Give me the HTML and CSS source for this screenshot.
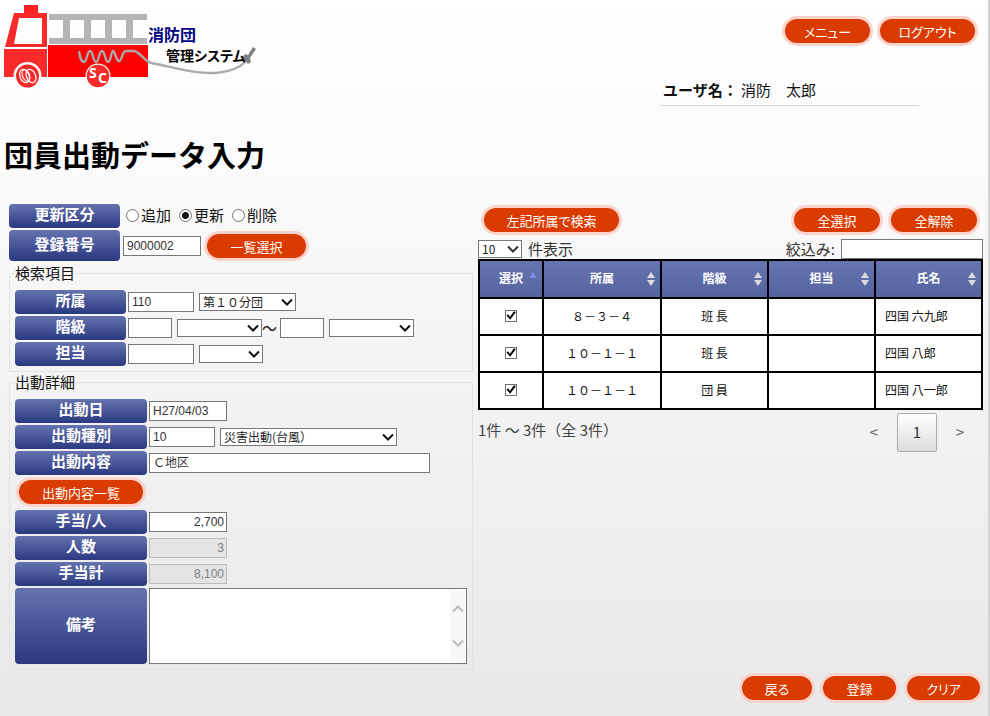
FILE: index.html
```html
<!DOCTYPE html>
<html lang="ja">
<head>
<meta charset="utf-8">
<meta name="viewport" content="width=device-width, initial-scale=1">
<title>団員出動データ入力</title>
<link rel="stylesheet" href="styles.css">
</head>
<body>
<svg width="0" height="0" class="defs" aria-hidden="true">
  <symbol id="chevron" viewBox="0 0 12 8"><path d="M1 1.500 6 6.500 11 1.500" fill="none" stroke="currentColor" stroke-width="2"/></symbol>
  <symbol id="sort" viewBox="0 0 8 14"><path d="M4 0 8 6H0ZM4 14 0 8H8Z" fill="currentColor"/></symbol>
</svg>

<header class="header">
  <svg class="logo" width="260" height="92" viewBox="0 0 260 92" role="img" aria-label="消防団管理システム">
    <rect x="24" y="5" width="14" height="8" fill="#f22"/>
    <path fill="#f82a2a" fill-rule="evenodd" d="M14 13H47V47H5ZM19 18 14 44H42V18Z"/>
    <rect x="4" y="49" width="43" height="28" fill="#f82a2a"/>
    <rect x="48" y="45" width="100" height="32" fill="#f00"/>
    <path fill="#b4b4b4" fill-rule="evenodd" d="M49 14H147V44H49ZM49 20V38H63V20ZM70 20V38H84V20ZM91 20V38H105V20ZM112 20V38H126V20ZM133 20V38H147V20Z"/>
    <circle cx="27.500" cy="76" r="14" fill="#fdfdfd"/>
    <circle cx="27.500" cy="76" r="11.500" fill="#f82a2a"/>
    <g fill="none" stroke="#fff" stroke-width="1.200">
      <ellipse cx="24.500" cy="76" rx="4.500" ry="7" transform="rotate(-22 24.500 76)"/>
      <ellipse cx="26" cy="75.500" rx="3.500" ry="6" transform="rotate(-22 26 75.500)"/>
      <ellipse cx="31" cy="76" rx="4.500" ry="7" transform="rotate(-22 31 76)"/>
    </g>
    <circle cx="98" cy="76" r="12.500" fill="#fff"/>
    <circle cx="98" cy="76" r="11.300" fill="#f82a2a"/>
    <text class="logo-mark" x="89" y="78">S</text>
    <text class="logo-mark" x="98" y="83">C</text>
    <path d="M79 51C80 57 81 62 84 62C87 62 87 51 90 51S93 62 96 62 99 51 102 51 105 62 108 62 111 51 113 51 116 61 119 61 122 51 126 51H133C140 51 143 60 151 63C170 66 188 73 210 73C228 73 240 68 247 60" fill="none" stroke="#aaa" stroke-width="2.400"/>
    <path d="m243 57 2-3 3 1 5-8 3 2-6 9 1 4-3 2Z" fill="#808080"/>
    <text class="logo-team" x="148" y="41">消防団</text>
    <text class="logo-system" x="166" y="61">管理システム</text>
  </svg>
  <div class="account">
    <nav class="actions account-nav">
      <button type="button" class="pill pill-menu">メニュー</button>
      <button type="button" class="pill pill-logout">ログアウト</button>
    </nav>
    <p class="user"><strong>ユーザ名：</strong> 消防　太郎</p>
  </div>
</header>

<h1 class="title">団員出動データ入力</h1>

<main class="workspace">
  <form class="entry">
    <div class="row" role="radiogroup" aria-labelledby="mode-label">
      <span class="tag" id="mode-label">更新区分</span>
      <span class="radios">
        <label class="radio"><input type="radio" name="mode">追加</label>
        <label class="radio"><input type="radio" name="mode" checked>更新</label>
        <label class="radio"><input type="radio" name="mode">削除</label>
      </span>
    </div>
    <div class="row">
      <label class="tag tag-tall" for="number">登録番号</label>
      <input class="field w-date" id="number" type="text" value="9000002">
      <button type="button" class="pill pill-list">一覧選択</button>
    </div>

    <fieldset class="group group-first">
      <legend>検索項目</legend>
      <div class="row">
        <label class="tag" for="unit">所属</label>
        <input class="field w-code" id="unit" type="text" value="110">
        <span class="select w-unit"><select aria-label="所属名"><option>第１０分団</option></select><svg><use href="#chevron"/></svg></span>
      </div>
      <div class="row">
        <label class="tag" for="rank-from">階級</label>
        <input class="field w-short" id="rank-from" type="text">
        <span class="range">
          <span class="select w-rank"><select aria-label="階級名（下限）"><option></option></select><svg><use href="#chevron"/></svg></span>
          <span class="tilde">～</span>
        </span>
        <input class="field w-short" type="text" aria-label="階級（上限）">
        <span class="select w-rank"><select aria-label="階級名（上限）"><option></option></select><svg><use href="#chevron"/></svg></span>
      </div>
      <div class="row">
        <label class="tag" for="duty">担当</label>
        <input class="field w-code" id="duty" type="text">
        <span class="select w-duty"><select aria-label="担当名"><option></option></select><svg><use href="#chevron"/></svg></span>
      </div>
    </fieldset>

    <fieldset class="group group-detail">
      <legend>出動詳細</legend>
      <div class="row">
        <label class="tag" for="date">出動日</label>
        <input class="field w-date" id="date" type="text" value="H27/04/03">
      </div>
      <div class="row">
        <label class="tag" for="kind">出動種別</label>
        <input class="field w-code" id="kind" type="text" value="10">
        <span class="select w-kind"><select aria-label="出動種別名"><option>災害出動(台風）</option></select><svg><use href="#chevron"/></svg></span>
      </div>
      <div class="row">
        <label class="tag" for="content">出動内容</label>
        <input class="field w-content" id="content" type="text" value="Ｃ地区">
      </div>
      <div class="row row-button">
        <button type="button" class="pill pill-content">出動内容一覧</button>
      </div>
      <div class="row">
        <label class="tag" for="pay">手当/人</label>
        <input class="field w-date number" id="pay" type="text" value="2,700">
      </div>
      <div class="row">
        <label class="tag" for="people">人数</label>
        <input class="field w-date number" id="people" type="text" value="3" disabled>
      </div>
      <div class="row">
        <label class="tag" for="total">手当計</label>
        <input class="field w-date number" id="total" type="text" value="8,100" disabled>
      </div>
      <div class="row">
        <label class="tag tag-note" for="note">備考</label>
        <span class="note"><textarea id="note"></textarea>
          <span class="scroll" aria-hidden="true"><svg class="up"><use href="#chevron"/></svg><svg><use href="#chevron"/></svg></span>
        </span>
      </div>
    </fieldset>
  </form>

  <section class="members" aria-label="団員一覧">
    <div class="toolbar">
      <button type="button" class="pill pill-search">左記所属で検索</button>
      <div class="actions">
        <button type="button" class="pill pill-all">全選択</button>
        <button type="button" class="pill pill-all">全解除</button>
      </div>
    </div>
    <div class="filters">
      <label class="length"><span class="select w-length"><select><option>10</option></select><svg><use href="#chevron"/></svg></span>件表示</label>
      <label class="filter">絞込み: <input class="field" type="text"></label>
    </div>
    <table class="grid">
      <colgroup><col class="c-pick"><col class="c-unit"><col class="c-rank"><col class="c-rank"><col class="c-rank"></colgroup>
      <thead>
        <tr>
          <th>選択<i class="sorted"></i></th>
          <th>所属<svg><use href="#sort"/></svg></th>
          <th>階級<svg><use href="#sort"/></svg></th>
          <th>担当<svg><use href="#sort"/></svg></th>
          <th>氏名<svg><use href="#sort"/></svg></th>
        </tr>
      </thead>
      <tbody>
        <tr><td><input type="checkbox" checked aria-label="四国 六九郎"></td><td>８－３－４</td><td>班 長</td><td></td><td class="name">四国 六九郎</td></tr>
        <tr><td><input type="checkbox" checked aria-label="四国 八郎"></td><td>１０－１－１</td><td>班 長</td><td></td><td class="name">四国 八郎</td></tr>
        <tr><td><input type="checkbox" checked aria-label="四国 八一郎"></td><td>１０－１－１</td><td>団 員</td><td></td><td class="name">四国 八一郎</td></tr>
      </tbody>
    </table>
    <div class="pager">
      <span>1件 ～ 3件（全 3件）</span>
      <nav class="pages" aria-label="ページ">
        <button type="button" class="page">&lt;</button>
        <button type="button" class="page page-current">1</button>
        <button type="button" class="page">&gt;</button>
      </nav>
    </div>
  </section>
</main>

<footer class="actions footer">
  <button type="button" class="pill pill-back">戻る</button>
  <button type="button" class="pill pill-save">登録</button>
  <button type="button" class="pill pill-clear">クリア</button>
</footer>
</body>
</html>
```
FILE: styles.css
```css
* {
  box-sizing: border-box;
}

body {
  margin: 0;
  min-height: 100vh;
  padding: 0 5px 0 9px;
  border-right: 2px solid #d4d4d4;
  background: linear-gradient(#ffffff, #fafafa 25%, #e8e8e8);
  color: #111;
  font-family: "Noto Sans CJK JP", sans-serif;
  font-size: 15px;
  line-height: 20px;
}

button,
input,
select,
textarea {
  font: inherit;
  color: inherit;
  margin: 0;
}

.defs {
  position: absolute;
}

/* Header */
.header {
  display: flex;
  justify-content: space-between;
  height: 118px;
}

.logo {
  margin-left: -9px;
}

.logo-mark {
  font: bold 14px "Open Sans", sans-serif;
  fill: #fff;
}

.logo-team {
  font-size: 16px;
  font-weight: bold;
  fill: #000080;
}

.logo-system {
  font-size: 14px;
  font-weight: bold;
  fill: #000;
  font-feature-settings: "palt";
}

.account {
  width: 323px;
  padding: 16px 5px 0 0;
}

.account-nav {
  justify-content: flex-end;
}

.user {
  width: 259px;
  margin: 34px 0 0;
  padding: 0 3px 5px;
  border-bottom: 1px solid #d8d8d8;
}

.title {
  margin: 15px 0 29px -5px;
  font-size: 29px;
  line-height: 42px;
  color: #000;
}

/* Pill buttons */
.actions {
  display: flex;
  gap: 4px;
}

.pill {
  height: 30px;
  padding: 2px 0 0;
  border: 3px solid #fcd3cc;
  border-radius: 15px;
  background: #d93b00;
  color: #fff;
  font-size: 13px;
  line-height: 18px;
  font-feature-settings: "palt";
}

.pill-menu {
  width: 91px;
}

.pill-logout {
  width: 101px;
}

.pill-list {
  width: 105px;
}

.pill-content {
  width: 130px;
}

.pill-search {
  width: 141px;
}

.pill-all {
  width: 92px;
}

.pill-back {
  width: 76px;
}

.pill-save,
.pill-clear {
  width: 79px;
}

/* Layout */
.workspace {
  display: grid;
  grid-template-columns: 464px minmax(0, 1fr);
  gap: 5px;
  align-items: start;
}

.row {
  display: flex;
  align-items: center;
  gap: 3px;
  margin-bottom: 2px;
}

.tag {
  display: flex;
  align-items: center;
  justify-content: center;
  flex: none;
  width: 111px;
  height: 24px;
  padding-bottom: 4px;
  border-radius: 4px;
  background: linear-gradient(#6573af, #2a3980);
  color: #fff;
  font-weight: bold;
}

.tag-tall {
  height: 31px;
}

.radios {
  display: flex;
  gap: 8px;
  padding-left: 3px;
}

.radio {
  display: flex;
  align-items: center;
  gap: 2px;
  line-height: 18px;
  padding-bottom: 2px;
}

.radio input {
  appearance: none;
  width: 13px;
  height: 13px;
  border: 1px solid #707070;
  border-radius: 50%;
  background: #fff;
}

.radio input:checked {
  background: radial-gradient(#111 3px, #fff 4px);
}

.group {
  min-width: 0;
  margin: 0;
  padding: 9px 5px 3px;
  border: 1px solid #e2e2e2;
  border-radius: 2px;
}

.group-first {
  margin: 4px 0 2px;
}

.group .row {
  gap: 2px;
}

.group legend {
  padding: 0;
  line-height: 16px;
}

.group-detail .tag {
  width: 132px;
}

.group-detail .tag-note {
  height: 76px;
}

.row-button {
  padding: 0 0 1px 1px;
}

/* Fields */
.field {
  height: 20px;
  padding: 0 3px;
  border: 1px solid #777;
  background: #fff;
  color: #333;
  font-family: "Liberation Sans", "Noto Sans CJK JP", sans-serif;
  font-size: 12px;
}

.field:disabled {
  border-color: #bbb;
  background: #e4e4e4;
  color: #808080;
}

.number {
  padding: 0 2px;
  text-align: right;
}

.w-date {
  width: 78px;
}

.w-code {
  width: 66px;
}

.w-short {
  width: 44px;
}

.w-content {
  width: 281px;
}

.w-unit {
  width: 97px;
}

.w-rank {
  width: 85px;
}

.w-duty {
  width: 64px;
}

.w-kind {
  width: 177px;
}

.w-length {
  width: 44px;
}

.select {
  position: relative;
  display: inline-flex;
}

.field + .select,
.field + .range {
  margin-left: 3px;
}

.select select {
  appearance: none;
  width: 100%;
  height: 18px;
  padding: 0 3px;
  border: 1px solid #777;
  border-radius: 0;
  background: #fff;
  color: #222;
  font-size: 12px;
  line-height: 16px;
}

.select svg {
  position: absolute;
  top: 5px;
  right: 3px;
  width: 12px;
  height: 8px;
  pointer-events: none;
}

.range {
  display: inline-flex;
  align-items: center;
}

.tilde {
  width: 16px;
}

.note {
  position: relative;
  display: flex;
  width: 318px;
  height: 76px;
}

.note textarea {
  width: 100%;
  padding: 2px 20px 2px 3px;
  border: 1px solid #777;
  background: #fff;
  resize: none;
}

.scroll {
  position: absolute;
  top: 2px;
  right: 2px;
  bottom: 2px;
  display: flex;
  flex-direction: column;
  justify-content: space-between;
  align-items: center;
  width: 15px;
  padding: 15px 0;
  background: #f7f7f7;
  color: #bcbcbc;
}

.scroll svg {
  width: 12px;
  height: 8px;
}

.scroll .up {
  transform: rotate(180deg);
}

/* Member list */
.toolbar {
  display: flex;
  justify-content: space-between;
  padding: 1px 3px 3px;
}

.toolbar .actions {
  gap: 5px;
}

.filters {
  display: flex;
  justify-content: space-between;
  align-items: center;
  height: 21px;
  color: #333;
  line-height: 18px;
}

.length,
.filter {
  display: flex;
  align-items: center;
  gap: 6px;
}

.filter .field {
  width: 142px;
}

.grid {
  width: 100%;
  border-collapse: collapse;
  table-layout: fixed;
  border: 2px solid #000;
  font-size: 12px;
}

.c-pick {
  width: 64px;
}

.c-unit {
  width: 118px;
}

.grid th,
.grid td {
  height: 37px;
  padding: 0 0 2px;
  border: 2px solid #000;
  text-align: center;
  line-height: 16px;
}

.grid th {
  position: relative;
  height: 38px;
  background: linear-gradient(#6674b0, #5563a0);
  color: #fff;
}

.grid th svg {
  position: absolute;
  top: 11px;
  right: 5px;
  width: 8px;
  height: 14px;
  color: #dcdcdc;
}

.sorted {
  position: absolute;
  top: 11px;
  right: 5px;
  border: 4px solid transparent;
  border-top: 0;
  border-bottom: 6px solid #8088e8;
}

.grid td {
  background: #fff;
}

.grid .name {
  padding-left: 9px;
  text-align: left;
}

.grid input {
  appearance: none;
  display: block;
  width: 12px;
  height: 12px;
  margin: 0 auto;
  border: 1px solid #707070;
  background: #fff;
}

.grid input:checked::before {
  content: "";
  display: block;
  height: 10px;
  background: #000;
  clip-path: polygon(5% 50%, 20% 38%, 40% 62%, 80% 8%, 98% 18%, 42% 92%);
}

.pager {
  display: flex;
  justify-content: space-between;
  padding: 3px 3px 0 0;
  color: #444;
}

.pager > span {
  padding-top: 7px;
}

.pages {
  display: flex;
  gap: 3px;
}

.page {
  width: 40px;
  height: 39px;
  padding: 0 0 2px;
  border: 1px solid transparent;
  border-radius: 2px;
  background: none;
  color: #666;
}

.page-current {
  border-color: #aaa;
  background: linear-gradient(#fff, #dcdcdc);
  color: #333;
}

.footer {
  justify-content: flex-end;
  gap: 5px;
  padding: 3px 0 13px;
}
```
